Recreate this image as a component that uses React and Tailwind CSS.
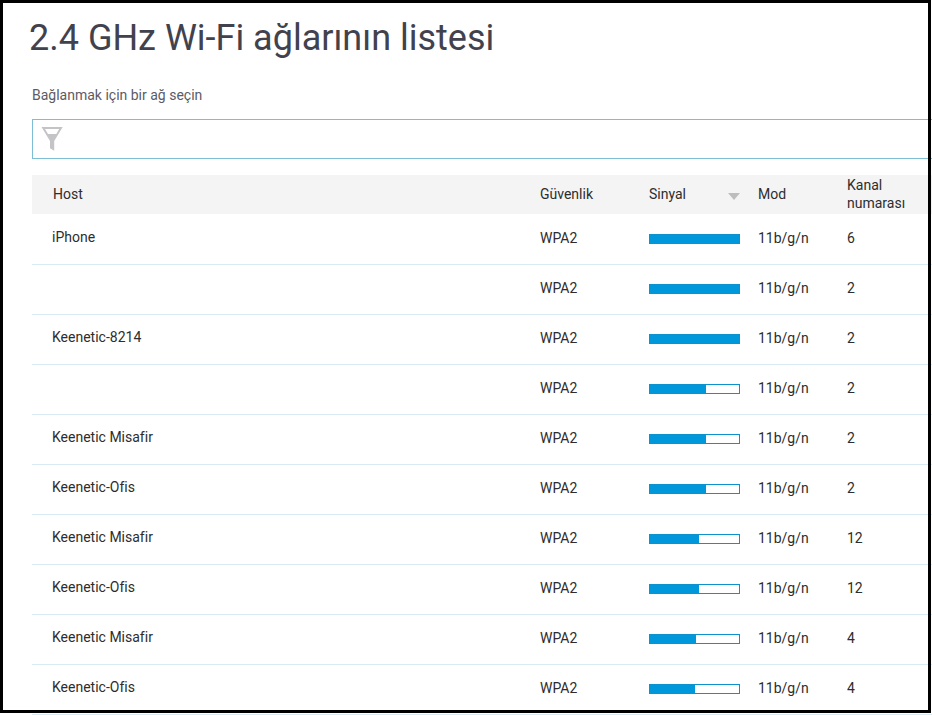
import { useState } from 'react';

const networks = [
  { host: 'iPhone', security: 'WPA2', signal: 100, mode: '11b/g/n', channel: 6 },
  { host: '', security: 'WPA2', signal: 100, mode: '11b/g/n', channel: 2 },
  { host: 'Keenetic-8214', security: 'WPA2', signal: 100, mode: '11b/g/n', channel: 2 },
  { host: '', security: 'WPA2', signal: 63, mode: '11b/g/n', channel: 2 },
  { host: 'Keenetic Misafir', security: 'WPA2', signal: 63, mode: '11b/g/n', channel: 2 },
  { host: 'Keenetic-Ofis', security: 'WPA2', signal: 63, mode: '11b/g/n', channel: 2 },
  { host: 'Keenetic Misafir', security: 'WPA2', signal: 55, mode: '11b/g/n', channel: 12 },
  { host: 'Keenetic-Ofis', security: 'WPA2', signal: 55, mode: '11b/g/n', channel: 12 },
  { host: 'Keenetic Misafir', security: 'WPA2', signal: 52, mode: '11b/g/n', channel: 4 },
  { host: 'Keenetic-Ofis', security: 'WPA2', signal: 51, mode: '11b/g/n', channel: 4 },
];

function FilterIcon() {
  return (
    <svg className="ml-2 shrink-0" width="22" height="24" viewBox="0 0 22 24" aria-hidden="true">
      <path fill="#c4c4c6" fillRule="evenodd" d="M0.5 0H21.7L13.2 14V23.7L9 21.2V14ZM4 2L7 7H15.3L18.2 2Z" />
    </svg>
  );
}

function SignalBar({ value }) {
  return (
    <div
      role="meter"
      aria-label="Sinyal"
      aria-valuemin={0}
      aria-valuemax={100}
      aria-valuenow={value}
      className="h-2.5 w-[91px] border border-[#0c92cf] bg-white"
    >
      <div className="h-full bg-[#0097db]" style={{ width: `${value}%` }} />
    </div>
  );
}

export default function App() {
  const [filter, setFilter] = useState('');

  // networks without a name stay in the list while nothing is typed
  const visible = networks.filter((network) => network.host.toLowerCase().includes(filter.toLowerCase()));

  return (
    <div className="relative overflow-hidden bg-white pl-8 pt-4 font-[Roboto,sans-serif] text-sm text-[#2d2d2d] [font-variant-ligatures:none]">
      <h1 className="-ml-[3px] text-[36px] leading-[44px] text-[#42424e]">2.4 GHz Wi-Fi ağlarının listesi</h1>
      <label htmlFor="filter" className="mt-6 block leading-[22px] text-[#5b5b66]">Bağlanmak için bir ağ seçin</label>
      <div className="mt-[13px] flex h-10 items-center border border-r-0 border-[#7dbdd6]">
        <FilterIcon />
        <input
          id="filter"
          type="text"
          value={filter}
          onChange={(e) => setFilter(e.target.value)}
          className="h-full w-full px-2 outline-none"
        />
      </div>
      <table className="mt-4 w-full table-fixed border-collapse text-left">
        <colgroup>
          <col />
          <col className="w-[109px]" />
          <col className="w-[109px]" />
          <col className="w-[89px]" />
          <col className="w-[85px]" />
        </colgroup>
        <thead>
          <tr className="h-[39px] bg-[#f4f4f4] leading-[18px]">
            <th className="pb-0.5 pl-[21px] font-normal">Host</th>
            <th className="pb-0.5 font-normal">Güvenlik</th>
            <th className="pb-0.5 font-normal">
              <button type="button" className="flex w-[91px] items-center justify-between">
                Sinyal
                <svg className="mt-1.5" width="12" height="7" viewBox="0 0 12 7" aria-hidden="true">
                  <path fill="#bdbdbd" d="M0 0H12L6 7Z" />
                </svg>
              </button>
            </th>
            <th className="pb-0.5 font-normal">Mod</th>
            <th className="pb-0.5 font-normal">Kanal numarası</th>
          </tr>
        </thead>
        <tbody>
          {visible.map((network, index) => (
            <tr key={index} className="h-[50px] border-b border-[#d8eaf3]">
              <td className="pb-1 pl-5">{network.host}</td>
              <td className="pb-0.5">{network.security}</td>
              <td><SignalBar value={network.signal} /></td>
              <td className="pb-0.5">{network.mode}</td>
              <td className="pb-0.5">{network.channel}</td>
            </tr>
          ))}
        </tbody>
      </table>
      {/* frame drawn over the page, lines run a little past it */}
      <div className="pointer-events-none absolute inset-0 right-px bottom-0.5 border-[3px] border-black" />
    </div>
  );
}
